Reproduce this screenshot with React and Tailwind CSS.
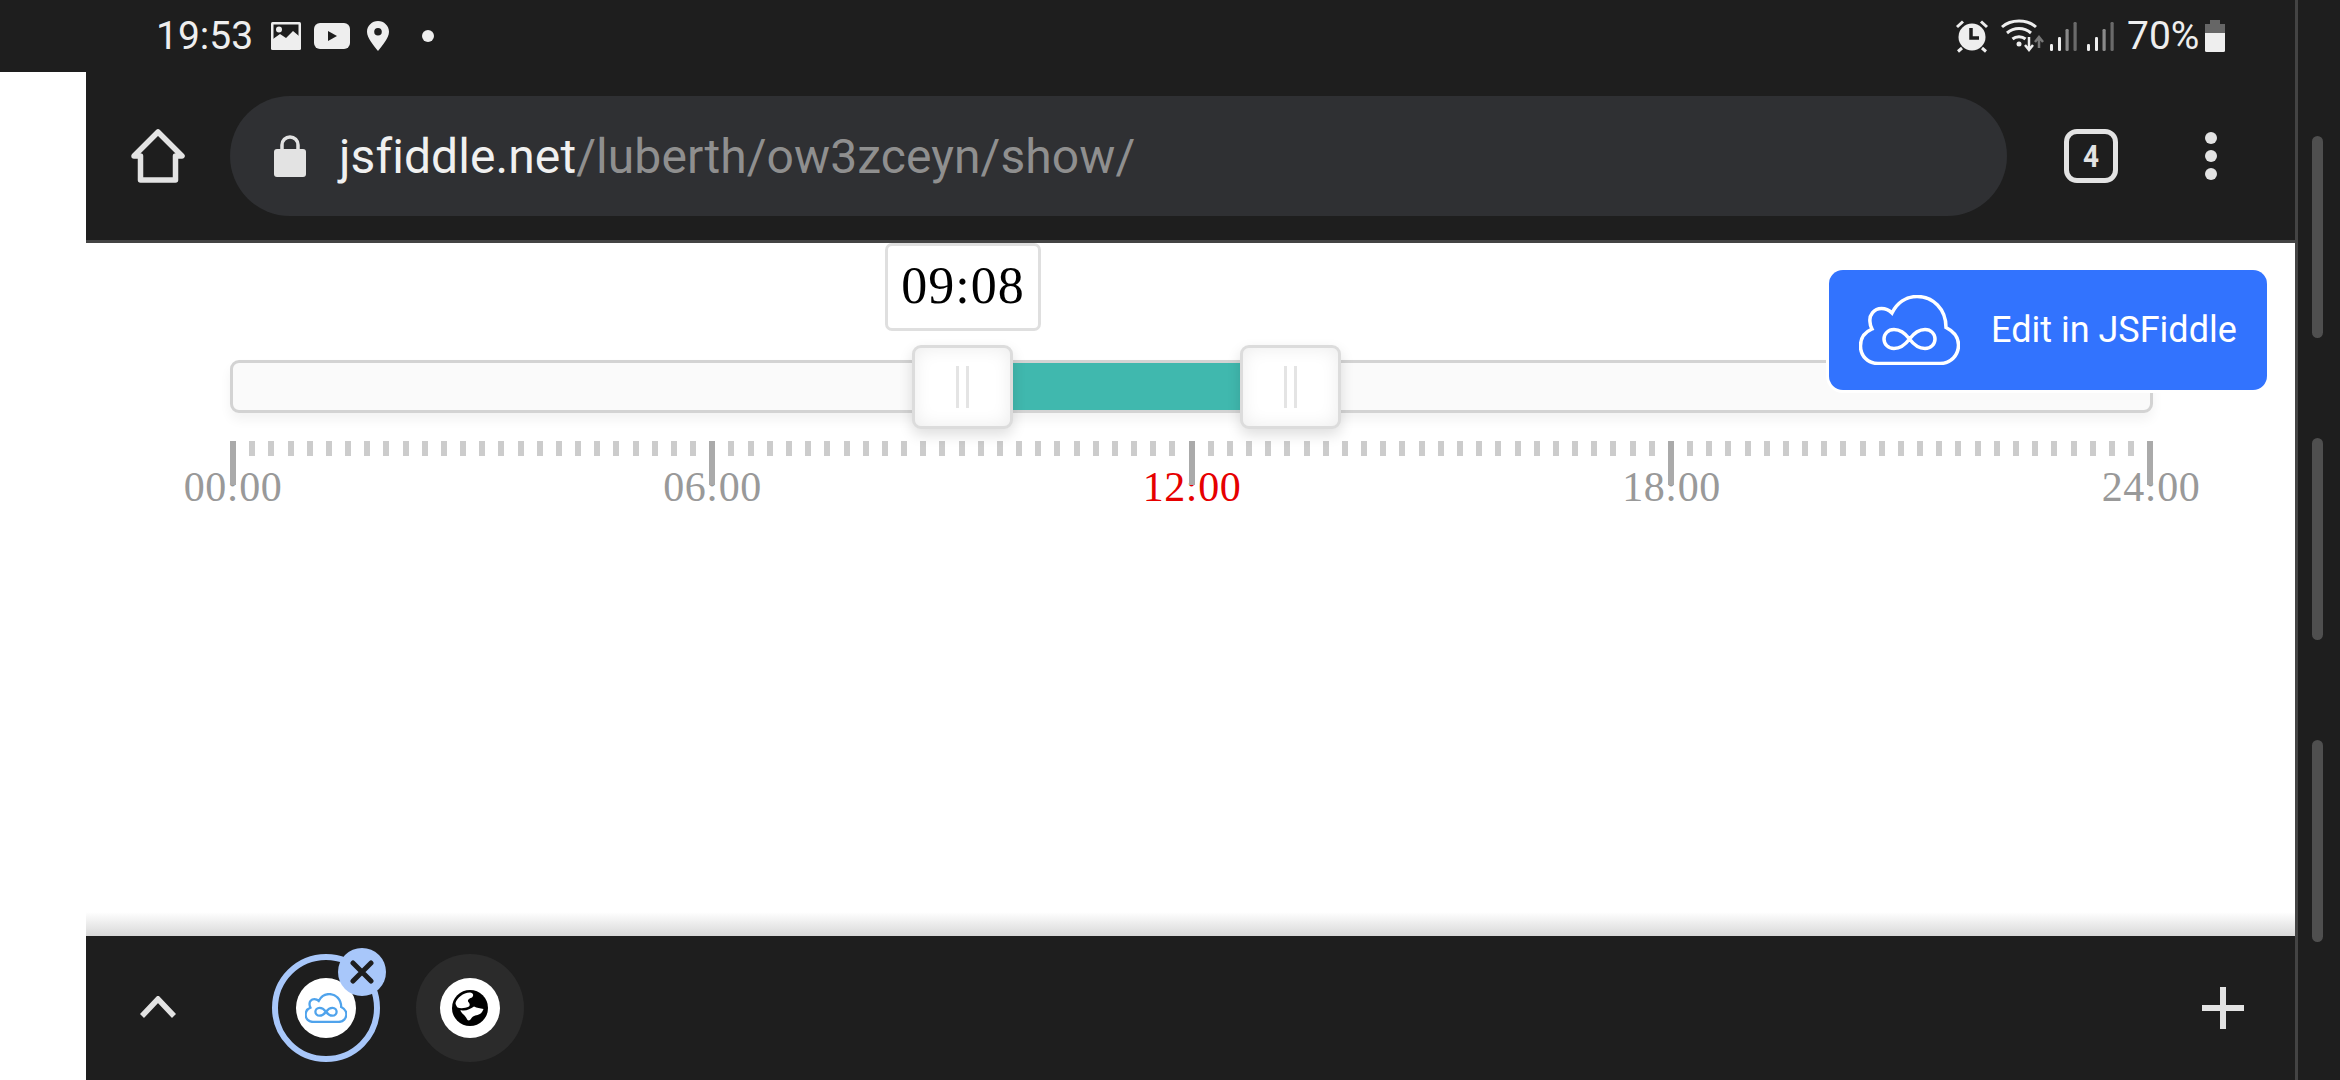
import React from "react";

const CLOUD = "M19 68.5H81C92 68.5 99.5 60 99.5 50C99.5 42 94 36 87 32.5C87 14 74 1.5 58 1.5C47 1.5 38 8 33 18C30 15 26 13.5 22.5 13.5C15 13.5 10 20 11 27C11 29 12 32 13 34C6 37 1.5 43 1.5 51C1.5 61 9 68.5 19 68.5Z";
const INF = "M50.5 44C46 38 42 34.5 35 34.5C29 34.5 25 39 25 44C25 49 29 53.5 35 53.5C42 53.5 46 50 50.5 44C55 38 59 34.5 66 34.5C72 34.5 76 39 76 44C76 49 72 53.5 66 53.5C59 53.5 55 50 50.5 44Z";

function CloudIcon({ className, color, sw }) {
  return (
    <svg viewBox="0 0 101 70" className={className} fill="none" stroke={color} strokeWidth={sw}>
      <path d={CLOUD} />
      <path d={INF} />
    </svg>
  );
}

function Signal({ className }) {
  return (
    <svg viewBox="0 0 27 30" className={className}>
      <rect x="0" y="23" width="3" height="7" rx="1.2" fill="#eee" />
      <rect x="8" y="16" width="3" height="14" rx="1.2" fill="#eee" />
      <rect x="15.5" y="8" width="3.2" height="22" rx="1.2" fill="#8a8a8a" />
      <rect x="23.5" y="1" width="3.2" height="29" rx="1.2" fill="#6a6a6a" />
    </svg>
  );
}

function StatusBar() {
  return (
    <div className="h-[72px] shrink-0 flex items-center text-[#eee] bg-[#1e1e1e]">
      <span className="ml-[156px] w-[100px] text-[39px] leading-none">19:53</span>
      <svg viewBox="0 0 30 28" className="ml-[15px] w-[30px] h-[28px]">
        <rect width="30" height="28" rx="1.5" fill="#eee" />
        <rect x="2.5" y="2.5" width="25" height="21" fill="#1e1e1e" />
        <path d="M2 24V17L9 12L15 16L22 9L28 14V24Z" fill="#eee" />
        <circle cx="8" cy="7.5" r="3" fill="#eee" />
      </svg>
      <svg viewBox="0 0 36 26" className="ml-[13px] w-[36px] h-[26px]">
        <rect width="36" height="26" rx="6" fill="#eee" />
        <path d="M14 8L23 13L14 18Z" fill="#1e1e1e" />
      </svg>
      <svg viewBox="0 0 22 30" className="ml-[17px] w-[22px] h-[30px]">
        <path fillRule="evenodd" d="M11 0C5 0 0 4.800 0 10.800C0 17 7 25 11 30C15 25 22 17 22 10.800C22 4.800 17 0 11 0ZM11 7A3.800 3.800 0 1 1 11 14.600A3.800 3.800 0 1 1 11 7Z" fill="#eee" />
      </svg>
      <div className="ml-[33px] w-[12px] h-[12px] rounded-full bg-[#eee]" />

      <svg viewBox="0 0 34 34" className="ml-[1521px] w-[34px] h-[34px]">
        <circle cx="17" cy="18" r="13.500" fill="#eee" />
        <path d="M16 9V19H24" fill="none" stroke="#1e1e1e" strokeWidth="3.500" />
        <path d="M2 8L8 2.500M26 2.500L32 8M7 29L3 32.500M27 29L31 32.500" stroke="#eee" strokeWidth="3" fill="none" />
      </svg>
      <svg viewBox="0 0 44 36" className="ml-[11px] w-[44px] h-[36px]" fill="none">
        <path d="M2 9C11 1 27 1 36 9" stroke="#eee" strokeWidth="3" />
        <path d="M7 15C14 9 24 9 31 15" stroke="#eee" strokeWidth="3" />
        <path d="M12.500 21C16 18 22 18 25.500 21" stroke="#eee" strokeWidth="3" />
        <circle cx="19" cy="26" r="2.500" fill="#eee" />
        <path d="M29 19V31M25 27L29 32L33 27" stroke="#eee" strokeWidth="2.500" />
        <path d="M39 30V20M35 24L39 19L43 24" stroke="#777" strokeWidth="2.500" />
      </svg>
      <Signal className="ml-[6px] w-[27px] h-[30px]" />
      <Signal className="ml-[10px] w-[27px] h-[30px]" />
      <span className="ml-[13px] text-[39px] leading-none">70%</span>
      <svg viewBox="0 0 20 32" className="ml-[6px] w-[20px] h-[32px]">
        <path d="M5 0H15V4H20V13H0V4H5Z" fill="#666" />
        <path d="M0 13H20V30.500Q20 32 18.500 32H1.500Q0 32 0 30.500Z" fill="#eee" />
      </svg>
    </div>
  );
}

function Toolbar() {
  return (
    <div className="h-[171px] shrink-0 flex items-center bg-[#1e1e1e] border-b-[3px] border-[#444]">
      <svg viewBox="0 0 54 54" className="ml-[45px] w-[54px] h-[54px]" fill="none" stroke="#e3e3e3" strokeWidth="5.500" strokeLinejoin="round" strokeLinecap="round">
        <path d="M3 27L27 3L51 27H44.500V51H9.500V27Z" />
      </svg>
      <div className="ml-[45px] w-[1777px] h-[120px] rounded-full bg-[#2f3033] flex items-center">
        <svg viewBox="0 0 32 42" className="ml-[44px] w-[32px] h-[42px]">
          <path d="M8 17V10A8 8 0 0 1 24 10V17" fill="none" stroke="#e3e3e3" strokeWidth="3.500" />
          <rect y="14" width="32" height="28" rx="3" fill="#e3e3e3" />
        </svg>
        <div className="ml-[33px] mt-[2px] text-[48px] leading-none tracking-[0.08px] whitespace-nowrap text-[#f0f0f0]">
          jsfiddle.net<span className="text-[#8f8f8f]">/luberth/ow3zceyn/show/</span>
        </div>
      </div>
      <div className="ml-[57px] w-[54px] h-[54px] rounded-[13px] border-[5.5px] border-[#e3e3e3] flex items-center justify-center">
        <span className="text-[31px] leading-none font-bold text-[#e3e3e3] scale-x-[0.9]">4</span>
      </div>
      <div className="ml-[87px] flex flex-col gap-[6px]">
        <div className="w-[12px] h-[12px] rounded-full bg-[#e3e3e3]" />
        <div className="w-[12px] h-[12px] rounded-full bg-[#e3e3e3]" />
        <div className="w-[12px] h-[12px] rounded-full bg-[#e3e3e3]" />
      </div>
    </div>
  );
}

function Handle({ className }) {
  return (
    <div className={"absolute top-[-15px] w-[101px] h-[84px] rounded-[9px] border-[3px] border-[#dcdcdc] bg-white shadow-[0_6px_14px_rgba(0,0,0,0.13),inset_0_0_18px_rgba(0,0,0,0.08)] flex justify-center items-center gap-[7px] " + className}>
      <div className="w-[3px] h-[42px] bg-[#e4e4e4]" />
      <div className="w-[3px] h-[42px] bg-[#e4e4e4]" />
    </div>
  );
}

function Slider() {
  const ticks = Array.from({ length: 101 }, (_, i) => i);
  const labels = [
    ["00:00", "text-[#999]"],
    ["06:00", "text-[#999]"],
    ["12:00", "text-[#e60000]"],
    ["18:00", "text-[#999]"],
    ["24:00", "text-[#999]"],
  ];
  return (
    <div className="w-[1924px] font-['Liberation_Serif',serif]">
      <div className="relative w-[1923px] h-[53px]">
        <div className="h-full rounded-[9px] border-[3px] border-[#d3d3d3] bg-[#fafafa] shadow-[0_7px_12px_rgba(0,0,0,0.05)]" />
        <div className="absolute left-[783px] top-[3px] w-[227px] h-[47px] bg-[#40b8ae]" />
        <Handle className="left-[682px]" />
        <Handle className="left-[1010px]" />
        <div className="absolute left-[655px] top-[-117px] w-[156px] h-[88px] rounded-[7px] border-[3px] border-[#dfdfdf] bg-white flex items-end justify-center pb-[12px]">
          <span className="text-[52px] leading-[60px] tracking-[1px] text-black">09:08</span>
        </div>
      </div>
      <div className="mt-[28px] h-[15px] flex justify-between items-start">
        {ticks.map((i) => (
          <div key={i} className={i % 25 === 0 ? "relative z-10 w-[6px] h-[44px] bg-[#aaa]" : "w-[6px] h-[15px] bg-[#ccc]"} />
        ))}
      </div>
      <div className="mt-[7px] flex justify-between">
        {labels.map(([t, c]) => (
          <div key={t} className="w-[6px] flex justify-center">
            <span className={"text-[42px] leading-[48px] tracking-[0.6px] whitespace-nowrap " + c}>{t}</span>
          </div>
        ))}
      </div>
    </div>
  );
}

function Page() {
  return (
    <div className="relative flex-1 bg-white overflow-hidden pt-[117px] pl-[144px]">
      <Slider />
      <div className="absolute top-[27px] right-[28px] w-[438px] h-[120px] rounded-[14px] bg-[#3273fe] shadow-[0_0_0_3px_#fff] flex items-center pl-[30px]">
        <CloudIcon className="w-[101px] h-[70px]" color="#fff" sw="3.5" />
        <span className="ml-[31px] text-[36px] leading-none text-white whitespace-nowrap">Edit in JSFiddle</span>
      </div>
      <div className="absolute left-0 right-0 bottom-0 h-[24px] bg-linear-to-b from-transparent to-[#d8d8d8]" />
    </div>
  );
}

function BottomBar() {
  return (
    <div className="h-[144px] shrink-0 bg-[#1e1e1e] flex items-center">
      <svg viewBox="0 0 36 22" className="ml-[54px] w-[36px] h-[22px] -mt-[2px]" fill="none" stroke="#e3e3e3" strokeWidth="5.500">
        <path d="M2 20L18 3L34 20" />
      </svg>
      <div className="relative ml-[96px] w-[108px] h-[108px] rounded-full border-[6px] border-[#a8c7fa] flex items-center justify-center">
        <div className="w-[60px] h-[60px] rounded-full bg-white flex items-center justify-center">
          <CloudIcon className="w-[42px] h-[30px]" color="#4fa3ec" sw="5.5" />
        </div>
        <div className="absolute left-[60px] top-[-12px] w-[48px] h-[48px] rounded-full bg-[#a8c7fa] flex items-center justify-center">
          <svg viewBox="0 0 24 24" className="w-[24px] h-[24px]" stroke="#1e1e1e" strokeWidth="5" strokeLinecap="round">
            <path d="M3 3L21 21M21 3L3 21" />
          </svg>
        </div>
      </div>
      <div className="ml-[36px] w-[108px] h-[108px] rounded-full bg-[#2b2b2b] flex items-center justify-center">
        <div className="w-[60px] h-[60px] rounded-full bg-white flex items-center justify-center">
          <svg viewBox="0 0 36 36" className="w-[36px] h-[36px]">
            <circle cx="18" cy="18" r="18" fill="#000" />
            <path d="M3.500 13C5 8 11 2.500 18 2.500C21.500 3 22 5.500 20 7.500C17 8.500 15.500 9.500 16 11.500C17.500 13 18.500 15 17 16.500C13 18.500 8 18.500 5.500 17.500C4.500 16 3.500 14.500 3.500 13Z" fill="#fff" />
            <path d="M8.500 20C13 21.500 18 19.500 22 16.500C25 18 28 18 31.500 19C30.500 22.500 28 24.500 25.500 25C22 25.500 20.500 26.500 19.500 28C18.500 30 17 31 15.500 30C14 27.500 13 25.500 11.500 24.500C10 23 8.500 21.500 8.500 20Z" fill="#fff" />
          </svg>
        </div>
      </div>
      <svg viewBox="0 0 42 42" className="ml-auto mr-[51px] w-[42px] h-[42px]">
        <path d="M18 0H24V18H42V24H24V42H18V24H0V18H18Z" fill="#e3e3e3" />
      </svg>
    </div>
  );
}

export default function App() {
  return (
    <div className="w-[2340px] h-[1080px] overflow-hidden flex bg-[#1e1e1e] font-['Roboto',sans-serif]">
      <div className="w-[2295px] h-full flex flex-col">
        <StatusBar />
        <div className="flex-1 flex min-h-0 bg-white">
          <div className="w-[86px] shrink-0 bg-white" />
          <div className="flex-1 flex flex-col min-w-0">
            <Toolbar />
            <Page />
            <BottomBar />
          </div>
        </div>
      </div>
      <div className="w-[3px] h-full bg-[#444]" />
      <div className="flex-1 pl-[14px] pt-[136px] flex flex-col gap-[100px]">
        <div className="w-[11px] h-[202px] rounded-full bg-[#4f4f4f]" />
        <div className="w-[11px] h-[202px] rounded-full bg-[#4f4f4f]" />
        <div className="w-[11px] h-[202px] rounded-full bg-[#4f4f4f]" />
      </div>
    </div>
  );
}
